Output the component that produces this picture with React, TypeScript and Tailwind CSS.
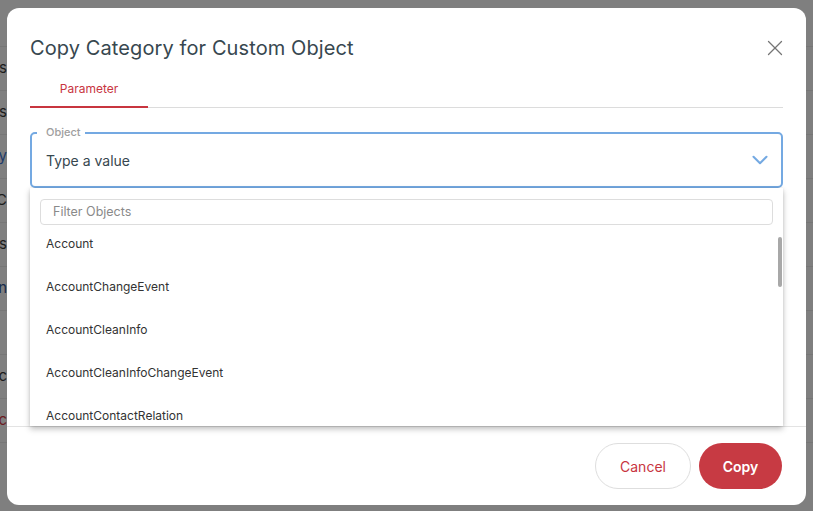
import { ChevronDown, X } from "lucide-react";

const bgRows = [
  { text: "s", color: "text-[#1c1c1c]" },
  { text: "ts", color: "text-[#1c1c1c]" },
  { text: "y", color: "text-[#1d3b6b]" },
  { text: "C", color: "text-[#1c1c1c]" },
  { text: "s", color: "text-[#1c1c1c]" },
  { text: "n", color: "text-[#162a4a]" },
  { text: "", color: "text-[#1c1c1c]" },
  { text: "c", color: "text-[#1c1c1c]" },
  { text: "c", color: "text-[#6b1a1e]" },
];

const objects = [
  "Account",
  "AccountChangeEvent",
  "AccountCleanInfo",
  "AccountCleanInfoChangeEvent",
  "AccountContactRelation",
  "AccountContactRole",
];

export default function App() {
  return (
    <div
      className="relative w-[813px] h-[511px] overflow-hidden bg-[#7f7f7f]"
      style={{ fontFamily: "Inter, 'Noto Sans', sans-serif" }}
    >
      {/* page behind the overlay */}
      <div className="flex flex-col pt-[6px]">
        <div className="h-[41px] border-b border-[#767676]" />
        {bgRows.map((r, i) => (
          <div
            key={i}
            className={`h-[44px] border-b border-[#767676] flex items-center justify-end w-[7px] overflow-visible text-[15px] ${r.color}`}
          >
            <span className="whitespace-nowrap">{r.text}</span>
          </div>
        ))}
        <div className="absolute left-[806px] top-0 w-[7px] flex flex-col pt-[6px]">
          <div className="h-[41px] border-b border-[#767676]" />
          {bgRows.map((_, i) => (
            <div key={i} className="h-[44px] border-b border-[#767676]" />
          ))}
        </div>
      </div>

      {/* dialog */}
      <div className="absolute left-[7px] top-[8px] w-[799px] h-[497px] rounded-[12px] bg-white flex flex-col">
        <div className="flex items-start justify-between pl-[23px] pr-[18px] pt-[26px]">
          <h2 className="text-[20px] leading-[28px] text-[#37474f] tracking-[0.1px]">
            Copy Category for Custom Object
          </h2>
          <button className="mt-[1px] text-[#757575]">
            <X size={26} strokeWidth={1.2} />
          </button>
        </div>

        <div className="mx-[23px] mt-[9px] flex border-b border-[#dcdcdc]">
          <div className="w-[118px] h-[37px] pt-[1px] flex items-center justify-center text-[12px] text-[#c8353f] border-b-2 border-[#c8353f] -mb-px">
            Parameter
          </div>
        </div>

        <div className="relative mx-[23px] mt-[24px]">
          <div className="relative h-[56px] rounded-[5px] border-2 border-[#74a9e2] flex items-center justify-between pl-[14px] pr-[8px]">
            <span className="absolute left-[5px] -top-[9px] bg-white pl-[9px] pr-[4px] text-[11px] leading-[14px] font-medium text-[#9e9e9e]">
              Object
            </span>
            <span className="text-[14px] text-[#37474f] pt-[1px]">Type a value</span>
            <ChevronDown size={26} strokeWidth={1.9} className="text-[#74a9e2]" />
          </div>

          <div className="absolute left-0 right-0 top-[56px] h-[238px] bg-white shadow-[0_3px_6px_rgba(0,0,0,0.25),0_0_3px_rgba(0,0,0,0.08)] z-10 flex flex-col">
            <div className="px-[10px] pt-[11px]">
              <div className="h-[26px] rounded-[4px] border border-[#dddddd] flex items-center pl-[12px] text-[12.5px] text-[#8a8a8a]">
                Filter Objects
              </div>
            </div>
            <div className="relative flex-1 overflow-hidden">
              <div className="flex flex-col -mt-[3px]">
                {objects.map((o) => (
                  <div key={o} className="h-[43px] shrink-0 flex items-center pl-[16px] text-[12px] text-[#333333]">
                    {o}
                  </div>
                ))}
              </div>
              <div className="absolute right-[1px] top-[12px] w-[4px] h-[50px] rounded-full bg-[#a8a8a8]" />
            </div>
          </div>
        </div>

        <div className="flex-1" />

        <div className="border-t border-[#e3e3e3] flex justify-end gap-[8px] pt-[16px] pb-[16px] pr-[24px]">
          <button className="w-[96px] h-[46px] rounded-full border border-[#dedede] text-[14px] text-[#c8353f]">
            Cancel
          </button>
          <button className="w-[83px] h-[46px] rounded-full bg-[#c73a43] text-[14px] font-semibold text-white">
            Copy
          </button>
        </div>
      </div>
    </div>
  );
}
